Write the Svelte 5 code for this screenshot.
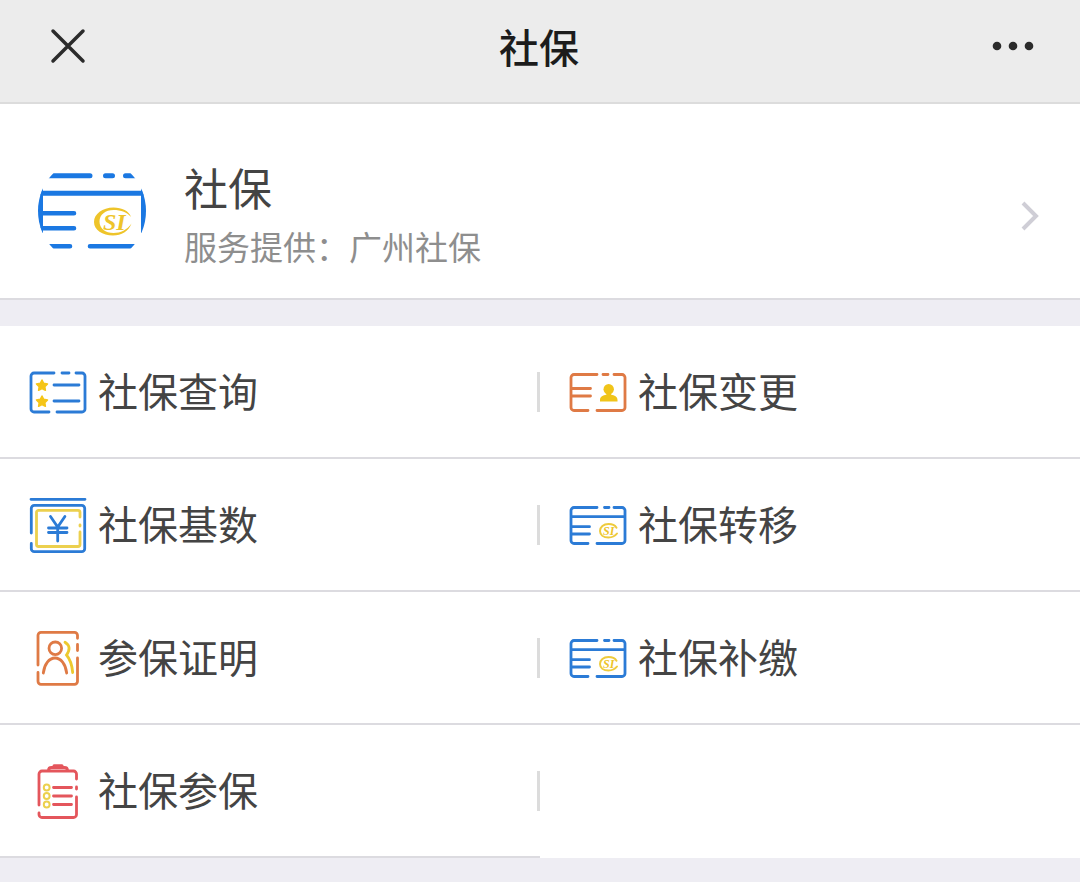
<script lang="ts">
  const provider = '广州社保';

  const services = [
    { name: '社保查询', icon: 'list' },
    { name: '社保变更', icon: 'change' },
    { name: '社保基数', icon: 'base' },
    { name: '社保转移', icon: 'card' },
    { name: '参保证明', icon: 'proof' },
    { name: '社保补缴', icon: 'card' },
    { name: '社保参保', icon: 'clipboard' }
  ];

  const handleClose = () => {
    // Close functionality
  };

  const handleMore = () => {
    // Menu functionality
  };
</script>

<svelte:head>
  <title>社保</title>
</svelte:head>

{#snippet listIcon()}
  <g stroke="#2b7bd6">
    <path d="M24 9H4a3 3 0 0 0-3 3v33a3 3 0 0 0 3 3h15M27 48h25a3 3 0 0 0 3-3V12a3 3 0 0 0-3-3h-6M32 9h7M24 21h25M24 37h25" />
  </g>
  <g fill="#f5c518" stroke="#f5c518" stroke-width="1.500" stroke-linejoin="round">
    <path d="M12 16l1.700 3.300 3.800.6-2.700 2.700.6 3.700L12 24.600l-3.400 1.700.6-3.700-2.700-2.700 3.800-.6z" />
    <path d="M12 32l1.700 3.300 3.800.6-2.700 2.700.6 3.700L12 40.600l-3.400 1.700.6-3.700-2.700-2.700 3.800-.6z" />
  </g>
{/snippet}

{#snippet changeIcon()}
  <g stroke="#df7a45">
    <path d="M27 10.500H4a3 3 0 0 0-3 3v30a3 3 0 0 0 3 3h14M27 46.500h25a3 3 0 0 0 3-3v-30a3 3 0 0 0-3-3h-8M33 10.500h5M2 24.500h18.500M2 32h18.500" />
  </g>
  <g fill="#f0c419" stroke="none">
    <circle cx="38.700" cy="25.300" r="5.200" />
    <path d="M30 37.500v-1.500c0-3.500 3-4.500 6.500-5.500v-2h4.500v2c3.500 1 6.500 2 6.500 5.500v1.500z" />
  </g>
{/snippet}

{#snippet baseIcon()}
  <g stroke="#2b7bd6">
    <path d="M1 2.300h54M1.300 36V11.300a3 3 0 0 1 3-3h47.400a3 3 0 0 1 3 3v40.400a3 3 0 0 1-3 3H4.300a3 3 0 0 1-3-3V46.500" />
    <path d="M20.500 19.500l7.200 10.500 7.200-10.500M27.700 30v14M18.500 31h18.500M18.500 35.500h18.500" />
  </g>
  <path stroke="#ecd04e" d="M50 20v-4.700a2 2 0 0 0-2-2H8.500a2 2 0 0 0-2 2v32.200a2 2 0 0 0 2 2H48a2 2 0 0 0 2-2V35M50 28v1" />
{/snippet}

{#snippet cardIcon()}
  <g stroke="#2b7bd6">
    <path d="M27 10.500H4a3 3 0 0 0-3 3v30a3 3 0 0 0 3 3h14M27 46.500h25a3 3 0 0 0 3-3v-30a3 3 0 0 0-3-3h-8M34.500 10.500h4.500M2 19.700h52M2 29.700h17.500M2 37h17.500" />
  </g>
  <path stroke="#eecb3d" stroke-width="2" d="M46.500 30.700c-1.500-2.500-4.500-3.700-8-3.700-5 0-8.500 3-8.500 7s3.500 6.500 8.500 6.500c3.500 0 6.500-1.500 8.500-4" />
  <text class="logo" x="33" y="38" font-size="12">SI</text>
{/snippet}

{#snippet proofIcon()}
  <g stroke="#df7a45">
    <path d="M8 35V5.300a3 3 0 0 1 3-3h33.500a3 3 0 0 1 3 3v3M47.500 14.500v6M47.500 28v23.300a3 3 0 0 1-3 3H11a3 3 0 0 1-3-3V42.500" />
    <circle cx="25.300" cy="18.300" r="6.300" />
    <path d="M13.300 43c1-9 6-15 11.700-15s10.700 6 11.700 15" />
  </g>
  <path stroke="#edc92e" d="M35 12.300c5 3.200 5.300 7.200 1.500 12.700 3.500 4 5.500 10 6.200 17.500" />
{/snippet}

{#snippet clipboardIcon()}
  <g stroke="#e4565c">
    <path d="M9 42V11a3 3 0 0 1 3-3h31.500a3 3 0 0 1 3 3v5M46.500 24v2M46.500 34v17.500a3 3 0 0 1-3 3H12a3 3 0 0 1-3-3V50M23.500 24.500h18M23.500 33h18M23.500 41.500h18" />
    <path d="M18.500 7.500c0-2 1-3 3-3h13c2 0 3 1 3 3" />
    <path d="M24 2.800h8" stroke-width="3" />
  </g>
  <g stroke="#ecd04e" stroke-width="2">
    <circle cx="16.700" cy="24.500" r="2.900" />
    <circle cx="16.700" cy="33" r="2.900" />
    <circle cx="16.700" cy="41.500" r="2.900" />
  </g>
{/snippet}

<div class="page">
  <header class="nav-bar">
    <button class="nav-btn" aria-label="关闭" on:click={handleClose}>
      <svg width="36" height="36" viewBox="0 0 36 36" fill="none" stroke="#2b2b2b" stroke-width="3.500" stroke-linecap="round">
        <path d="M3 3l30 30M33 3L3 33" />
      </svg>
    </button>
    <h1>社保</h1>
    <button class="nav-btn" aria-label="更多" on:click={handleMore}>
      <svg width="42" height="12" viewBox="0 0 42 12" fill="#2b2b2b">
        <circle cx="5" cy="6" r="4.300" />
        <circle cx="21" cy="6" r="4.300" />
        <circle cx="37" cy="6" r="4.300" />
      </svg>
    </button>
  </header>

  <main>
    <a href="#provider" class="provider">
      <svg class="provider-icon" width="108" height="108" viewBox="0 0 108 108" fill="none" stroke-linecap="round">
        <clipPath id="round"><circle cx="54" cy="54" r="54" /></clipPath>
        <g clip-path="url(#round)" stroke="#1b78e2" stroke-width="5">
          <path d="M4 18.700h48M67.500 18.700h7M87.500 18.700H104M3 36.300h102" />
          <path d="M4 56.200h32M4 71.200h32M4 89.300h28M52 89.300h52" stroke-width="4.600" />
          <path d="M2 31v45M106 31v45" stroke-width="6" stroke-linecap="butt" />
        </g>
        <path fill="#eec42a" d="M93 60c-2-6-9-9.500-17.500-9.500C64.500 50.500 56 57 56 65s8.500 13.500 19 13.500c8.500 0 15.500-4 18.500-12-4.500 6.500-11 9.500-18 9.500-8 0-14-4.500-14-11.500s6-11.500 14-11.500c7.500 0 14 2.500 17.500 7z" />
        <text class="logo" x="65" y="73" font-size="24">SI</text>
      </svg>
      <div class="provider-text">
        <h2>社保</h2>
        <p>服务提供：{provider}</p>
      </div>
      <svg width="20" height="32" viewBox="0 0 20 32" fill="none" stroke="#cfced6" stroke-width="4">
        <path d="M3 3l13 13L3 29" />
      </svg>
    </a>

    <nav class="services">
      {#each services as service}
        <a href="#{service.icon}" class="service">
          <svg width="56" height="56" viewBox="0 0 56 56" fill="none" stroke-width="2.800" stroke-linecap="round" overflow="visible">
            {#if service.icon === 'list'}
              {@render listIcon()}
            {:else if service.icon === 'change'}
              {@render changeIcon()}
            {:else if service.icon === 'base'}
              {@render baseIcon()}
            {:else if service.icon === 'proof'}
              {@render proofIcon()}
            {:else if service.icon === 'clipboard'}
              {@render clipboardIcon()}
            {:else}
              {@render cardIcon()}
            {/if}
          </svg>
          <span>{service.name}</span>
        </a>
      {/each}
    </nav>
  </main>
</div>

<style>
  :global(body) {
    background: #eeedf3;
  }

  .page {
    font-family: "Noto Sans CJK SC", sans-serif;
    color: #444;
  }

  /* Top bar */
  .nav-bar {
    display: flex;
    align-items: center;
    justify-content: space-between;
    padding: 16px 46px 26px 50px;
    background: #ececec;
    border-bottom: 2px solid #dcdcdc;
  }

  .nav-bar h1 {
    margin: 0;
    font-size: 40px;
    line-height: 60px;
    font-weight: 500;
    color: #1c1c1c;
  }

  .nav-btn {
    display: flex;
    padding: 0;
    border: none;
    background: none;
    cursor: pointer;
  }

  /* Provider */
  .provider {
    display: flex;
    align-items: center;
    padding: 53px 40px 23px 38px;
    background: #fff;
    border-bottom: 2px solid #dcdbe0;
    color: inherit;
    text-decoration: none;
  }

  .provider-icon {
    align-self: flex-start;
  }

  .provider-text {
    flex: 1;
    margin-left: 38px;
  }

  .provider-text h2 {
    margin: 0;
    font-size: 44px;
    line-height: 60px;
    font-weight: 400;
  }

  .provider-text p {
    margin: 0;
    font-size: 33px;
    line-height: 58px;
    font-weight: 400;
    color: #8e8e8e;
  }

  .logo {
    font-family: "Liberation Serif", serif;
    font-weight: bold;
    font-style: italic;
    fill: #eec42a;
  }

  /* Service grid */
  .services {
    display: grid;
    grid-template-columns: 1fr 1fr;
    margin-top: 26px;
    background: #fff;
  }

  .service {
    display: flex;
    align-items: center;
    gap: 12px;
    padding: 38px 0 37px 30px;
    border-bottom: 2px solid #dcdbe0;
    color: inherit;
    text-decoration: none;
  }

  .service span {
    padding-bottom: 4px;
    font-size: 40px;
    line-height: 52px;
  }

  .service:nth-child(odd)::after {
    content: '';
    width: 3px;
    height: 40px;
    margin-left: auto;
    background: #dcdcdc;
  }
</style>
